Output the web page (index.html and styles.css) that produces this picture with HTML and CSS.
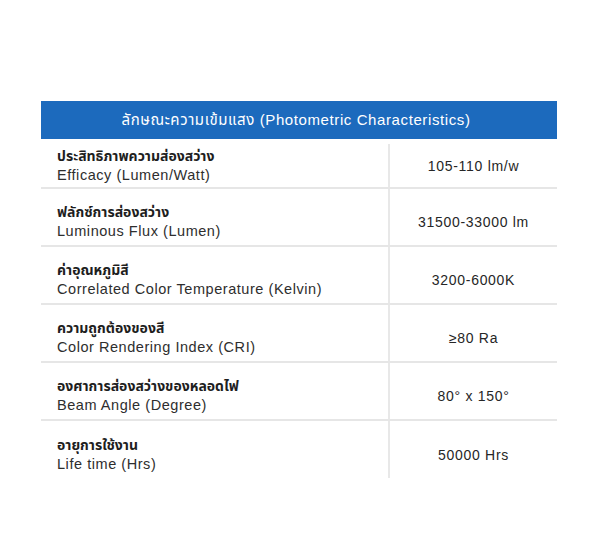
FILE: index.html
```html
<!DOCTYPE html>
<html lang="th">
<head>
<meta charset="utf-8">
<title>Photometric Characteristics</title>
<link rel="stylesheet" href="styles.css">
</head>
<body>
<div class="spec">
  <div class="head">ลักษณะความเข้มแสง (Photometric Characteristics)</div>
  <div class="row first">
    <div class="label"><div class="th">ประสิทธิภาพความส่องสว่าง</div><div class="en">Efficacy (Lumen/Watt)</div></div>
    <div class="val">105-110 lm/w</div>
  </div>
  <div class="row">
    <div class="label"><div class="th">ฟลักซ์การส่องสว่าง</div><div class="en">Luminous Flux (Lumen)</div></div>
    <div class="val">31500-33000 lm</div>
  </div>
  <div class="row">
    <div class="label"><div class="th">ค่าอุณหภูมิสี</div><div class="en">Correlated Color Temperature (Kelvin)</div></div>
    <div class="val">3200-6000K</div>
  </div>
  <div class="row">
    <div class="label"><div class="th">ความถูกต้องของสี</div><div class="en">Color Rendering Index (CRI)</div></div>
    <div class="val">≥80 Ra</div>
  </div>
  <div class="row">
    <div class="label"><div class="th">องศาการส่องสว่างของหลอดไฟ</div><div class="en">Beam Angle (Degree)</div></div>
    <div class="val">80° x 150°</div>
  </div>
  <div class="row last">
    <div class="label"><div class="th">อายุการใช้งาน</div><div class="en">Life time (Hrs)</div></div>
    <div class="val">50000 Hrs</div>
  </div>
</div>
</body>
</html>
```
FILE: styles.css
```css
html, body {
  margin: 0;
  padding: 0;
  background: #ffffff;
}
body {
  font-family: "Liberation Sans", "Noto Sans Thai", "Noto Sans", sans-serif;
  color: #2a2a2a;
}
.spec {
  width: 516px;
  margin: 101px 0 0 41px;
}
.head {
  height: 38px;
  background: #1c6abd;
  color: #ffffff;
  display: flex;
  align-items: center;
  justify-content: center;
  font-size: 15px;
  letter-spacing: 0.6px;
  padding-right: 6px;
}
.row {
  display: grid;
  grid-template-columns: 347px 1fr;
  height: 58px;
  box-sizing: border-box;
  border-bottom: 2px solid #e6e6e6;
}
.row.first {
  height: 50px;
}
.row.last {
  border-bottom: none;
  height: 57px;
}
.label {
  display: flex;
  flex-direction: column;
  justify-content: center;
  padding: 10px 0 0 16px;
}
.row.first .label {
  padding-top: 5px;
}
.th {
  font-size: 14px;
  line-height: 19px;
  font-weight: bold;
  color: #1e1e1e;
}
.en {
  font-size: 14.5px;
  line-height: 19px;
  letter-spacing: 0.55px;
  color: #2e2e2e;
}
.val {
  border-left: 2px solid #e8e8e8;
  display: flex;
  align-items: center;
  justify-content: center;
  padding-top: 10px;
  font-size: 14px;
  letter-spacing: 0.7px;
  color: #262626;
}
.row.first .val {
  padding-top: 0;
  margin-top: 5px;
}
```
